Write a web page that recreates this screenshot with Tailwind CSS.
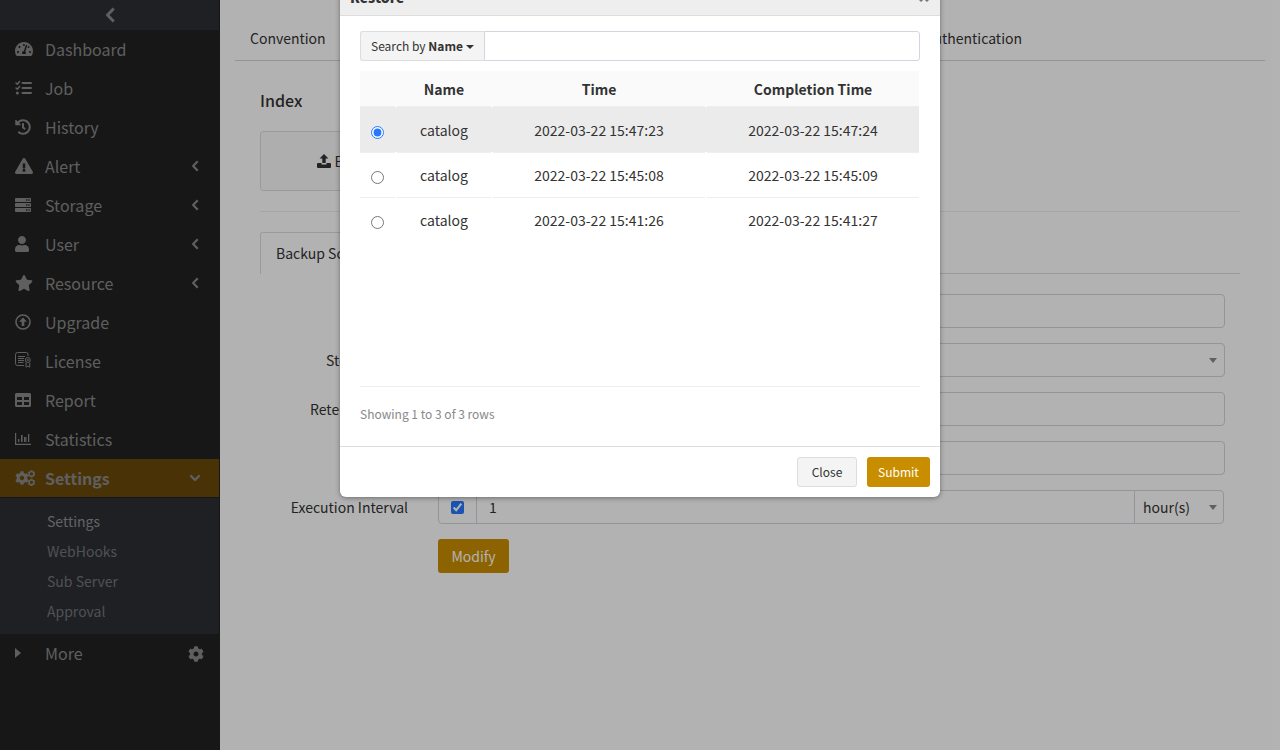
<!DOCTYPE html>
<html lang="en">
<head>
<meta charset="utf-8">
<title>Settings - Index</title>
<script src="https://cdn.jsdelivr.net/npm/@tailwindcss/browser@4"></script>
</head>
<body class="relative min-h-screen overflow-hidden bg-white font-['Noto_Sans_CJK_SC','Noto_Sans',sans-serif] text-sm text-[#333]">
<svg class="hidden" aria-hidden="true">
  <symbol id="left" viewBox="0 0 320 512"><path d="M245 85L80 256l165 171" fill="none" stroke="currentColor" stroke-width="95" stroke-linejoin="round" stroke-linecap="square"/></symbol>
  <symbol id="cog" viewBox="0 0 512 512"><path d="M487.4 315.7l-42.6-24.6c4.3-23.2 4.3-47 0-70.2l42.6-24.6c4.9-2.8 7.1-8.6 5.5-14-11.1-35.6-30-67.8-54.7-94.6-3.8-4.1-10-5.1-14.8-2.3L380.8 110c-17.9-15.4-38.5-27.3-60.8-35.1V25.8c0-5.6-3.9-10.5-9.4-11.7-36.7-8.2-74.3-7.8-109.2 0-5.5 1.2-9.4 6.1-9.4 11.7V75c-22.2 7.9-42.8 19.8-60.8 35.1L88.700 85.500c-4.900-2.800-11-1.900-14.800 2.300-24.700 26.700-43.600 58.900-54.700 94.600-1.700 5.400.6 11.200 5.500 14L67.300 221c-4.300 23.200-4.300 47 0 70.200l-42.600 24.600c-4.900 2.800-7.100 8.600-5.500 14 11.100 35.600 30 67.800 54.700 94.600 3.800 4.100 10 5.100 14.800 2.300l42.600-24.600c17.900 15.400 38.500 27.300 60.800 35.100v49.200c0 5.600 3.900 10.500 9.400 11.700 36.700 8.200 74.300 7.800 109.200 0 5.500-1.200 9.400-6.100 9.400-11.700v-49.200c22.200-7.900 42.800-19.800 60.800-35.100l42.600 24.600c4.900 2.800 11 1.900 14.800-2.300 24.700-26.700 43.600-58.900 54.700-94.600 1.500-5.500-.7-11.300-5.600-14.100zM256 336c-44.100 0-80-35.900-80-80s35.900-80 80-80 80 35.900 80 80-35.900 80-80 80z"/></symbol>
</svg>

<div class="flex min-h-screen">
  <aside class="w-[220px] shrink-0 bg-[#222] text-base text-[#888]">
    <button type="button" aria-label="Collapse menu" class="mr-px flex h-[30px] w-[219px] items-center justify-center bg-[#2c2f34]"><svg class="h-4 w-[10px]"><use href="#left"/></svg></button>
    <nav aria-label="Main">
      <ul>
        <li><a href="#" class="flex h-[39px] items-center pb-[2px] pl-[15px]"><span class="w-[30px]"><svg class="h-4 w-[18px] fill-current" viewBox="0 0 576 512"><path d="M288 32C128.94 32 0 160.94 0 320c0 52.8 14.25 102.26 39.06 144.8 5.61 9.62 16.3 15.2 27.44 15.2h443c11.14 0 21.83-5.58 27.44-15.2C561.75 422.26 576 372.8 576 320c0-159.06-128.94-288-288-288zm0 64c14.71 0 26.58 10.13 30.32 23.65-1.11 2.26-2.64 4.23-3.45 6.67l-9.22 27.67c-5.13 3.49-10.97 6.01-17.64 6.01-17.67 0-32-14.33-32-32S270.33 96 288 96zM96 384c-17.67 0-32-14.33-32-32s14.33-32 32-32 32 14.33 32 32-14.33 32-32 32zm48-160c-17.67 0-32-14.33-32-32s14.33-32 32-32 32 14.33 32 32-14.33 32-32 32zm246.77-72.41l-61.33 184C343.13 347.33 352 364.54 352 384c0 11.72-3.38 22.55-8.88 32H232.88c-5.5-9.45-8.88-20.28-8.88-32 0-33.94 26.5-61.43 59.9-63.59l61.34-184.01c4.17-12.56 17.73-19.45 30.36-15.17 12.57 4.19 19.35 17.79 15.17 30.36zm14.66 57.2l15.52-46.55c3.47-1.29 7.13-2.23 11.05-2.23 17.67 0 32 14.33 32 32s-14.33 32-32 32c-11.38-.01-20.89-6.28-26.57-15.22zM480 384c-17.67 0-32-14.33-32-32s14.33-32 32-32 32 14.33 32 32-14.33 32-32 32z"/></svg></span>Dashboard</a></li>
        <li><a href="#" class="flex h-[39px] items-center pb-[2px] pl-[15px]"><span class="w-[30px]"><svg class="h-4 w-[18px]" viewBox="0 0 18 16" fill="none" stroke="currentColor"><path stroke-width="2" stroke-linecap="round" d="M7.5 3H16M7.5 8H16M7.5 13H16"/><path stroke-width="1.5" stroke-linecap="round" stroke-linejoin="round" d="M1 3l1.3 1.3L4.6 1.6M1 8l1.3 1.3L4.6 6.6"/><circle cx="2.4" cy="13" r="1.5" fill="currentColor" stroke="none"/></svg></span>Job</a></li>
        <li><a href="#" class="flex h-[39px] items-center pb-[2px] pl-[15px]"><span class="w-[30px]"><svg class="h-4 w-4 fill-current" viewBox="0 0 512 512"><path d="M504 255.531c.253 136.64-111.18 248.372-247.82 248.468-59.015.042-113.223-20.53-155.822-54.911-11.077-8.94-11.905-25.541-1.839-35.607l11.267-11.267c8.609-8.609 22.353-9.551 31.891-1.984C173.062 425.135 212.781 440 256 440c101.705 0 184-82.311 184-184 0-101.705-82.311-184-184-184-48.814 0-93.149 18.969-126.068 49.932l50.754 50.754c10.08 10.08 2.941 27.314-11.313 27.314H24c-8.837 0-16-7.163-16-16V38.627c0-14.254 17.234-21.393 27.314-11.314l49.372 49.372C129.209 34.136 189.552 8 256 8c136.81 0 247.747 110.78 248 247.531zm-180.912 78.784l9.823-12.63c8.138-10.463 6.253-25.542-4.21-33.679L288 256.349V152c0-13.255-10.745-24-24-24h-16c-13.255 0-24 10.745-24 24v135.651l65.409 50.874c10.463 8.137 25.541 6.253 33.679-4.21z"/></svg></span>History</a></li>
        <li><a href="#" class="flex h-[39px] items-center pr-[21px] pb-[2px] pl-[15px]"><span class="w-[30px]"><svg class="h-4 w-[18px] fill-current" viewBox="0 0 576 512"><path d="M569.517 440.013C587.975 472.007 564.806 512 527.94 512H48.054c-36.937 0-59.999-40.055-41.577-71.987L246.423 23.985c18.467-32.009 64.72-31.951 83.154 0l239.94 416.028zM288 354c-25.405 0-46 20.595-46 46s20.595 46 46 46 46-20.595 46-46-20.595-46-46-46zm-43.673-165.346l7.418 136c.347 6.364 5.609 11.346 11.982 11.346h48.546c6.373 0 11.635-4.982 11.982-11.346l7.418-136c.375-6.874-5.098-12.654-11.982-12.654h-63.383c-6.884 0-12.356 5.78-11.981 12.654z"/></svg></span><span class="grow">Alert</span><svg class="mt-px h-3 w-2"><use href="#left"/></svg></a></li>
        <li><a href="#" class="flex h-[39px] items-center pr-[21px] pb-[2px] pl-[15px]"><span class="w-[30px]"><svg class="h-4 w-4 fill-current" viewBox="0 0 16 16"><path fill-rule="evenodd" d="M.7 1h14.6q.7 0 .7.7v2.6q0 .7-.7.7H.7Q0 5 0 4.300V1.700Q0 1 .7 1zM11 2.300v1.400h1.300V2.300zM13.300 2.300v1.400h1.300V2.300zM.7 6h14.6q.7 0 .7.7v2.600q0 .7-.7.7H.7Q0 10 0 9.300V6.700Q0 6 .7 6zM11 7.300v1.400h1.300V7.300zM13.300 7.300v1.400h1.300V7.300zM.7 11h14.600q.7 0 .7.7v2.600q0 .7-.7.7H.7Q0 15 0 14.300v-2.600Q0 11 .7 11zM11 12.300v1.400h1.300v-1.400zM13.300 12.300v1.400h1.300v-1.400z"/></svg></span><span class="grow">Storage</span><svg class="mt-px h-3 w-2"><use href="#left"/></svg></a></li>
        <li><a href="#" class="flex h-[39px] items-center pr-[21px] pb-[2px] pl-[15px]"><span class="w-[30px]"><svg class="h-4 w-[14px] fill-current" viewBox="0 0 448 512"><path d="M224 256c70.7 0 128-57.3 128-128S294.7 0 224 0 96 57.3 96 128s57.3 128 128 128zm89.6 32h-16.7c-22.2 10.2-46.9 16-72.9 16s-50.6-5.8-72.9-16h-16.700C60.200 288 0 348.200 0 422.400V464c0 26.500 21.500 48 48 48h352c26.500 0 48-21.500 48-48v-41.600c0-74.200-60.200-134.400-134.400-134.400z"/></svg></span><span class="grow">User</span><svg class="mt-px h-3 w-2"><use href="#left"/></svg></a></li>
        <li><a href="#" class="flex h-[39px] items-center pr-[21px] pb-[2px] pl-[15px]"><span class="w-[30px]"><svg class="h-4 w-[18px] fill-current" viewBox="0 0 576 512"><path d="M259.300 17.800L194 150.200 47.900 171.500c-26.200 3.800-36.700 36.100-17.700 54.600l105.700 103-25 145.500c-4.500 26.300 23.200 46 46.400 33.700L288 439.600l130.700 68.700c23.200 12.200 50.900-7.400 46.400-33.700l-25-145.500 105.700-103c19-18.500 8.500-50.800-17.700-54.600L382 150.200 316.700 17.800c-11.700-23.600-45.600-23.900-57.400 0z"/></svg></span><span class="grow">Resource</span><svg class="mt-px h-3 w-2"><use href="#left"/></svg></a></li>
        <li><a href="#" class="flex h-[39px] items-center pb-[2px] pl-[15px]"><span class="w-[30px]"><svg class="h-4 w-4" viewBox="0 0 16 16"><circle cx="8" cy="8" r="7" fill="none" stroke="currentColor" stroke-width="1.600"/><path fill="currentColor" d="M8 3.500l4 4.300H9.300V12H6.700V7.800H4z"/></svg></span>Upgrade</a></li>
        <li><a href="#" class="flex h-[39px] items-center pb-[2px] pl-[15px]"><span class="w-[30px]"><svg class="mb-px h-4 w-4" viewBox="0 0 16 16" fill="none" stroke="currentColor"><path d="M9 13.500H2.500q-2 0-2-2v-9q0-2 2-2h9q1.500 0 1.500 1.500v2"/><path d="M3 4.500h7M3 6.500h6M3 8.500h6M3 10.500h5.500"/><circle cx="12.800" cy="8" r="2.500"/><circle cx="12.800" cy="8" r=".7"/><path d="M11 10.500v4.700l1.800-1.200 1.900 1.200v-4.700"/></svg></span>License</a></li>
        <li><a href="#" class="flex h-[39px] items-center pb-[2px] pl-[15px]"><span class="w-[30px]"><svg class="h-4 w-4 fill-current" viewBox="0 0 512 512"><path d="M464 32H48C21.490 32 0 53.490 0 80v352c0 26.510 21.490 48 48 48h416c26.510 0 48-21.490 48-48V80c0-26.510-21.490-48-48-48zM224 416H64v-96h160v96zm0-160H64v-96h160v96zm224 160H288v-96h160v96zm0-160H288v-96h160v96z"/></svg></span>Report</a></li>
        <li><a href="#" class="flex h-[39px] items-center pb-[2px] pl-[15px]"><span class="w-[30px]"><svg class="h-4 w-4 fill-current" viewBox="0 0 16 16"><path d="M0 2h1.200v10.800H16V14H0zM3 8h1.300v3H3zM6 4h1.600v7H6zM9 6h1.500v5H9zM10.800 6h.7v5h-.7zM13 3h1.300v8H13z"/></svg></span>Statistics</a></li>
        <li>
          <a href="#" class="mr-px flex h-[39px] items-center border-b border-[#222] bg-[#6a480b] pr-[18px] pl-[15px] font-bold"><span class="w-[30px]"><svg class="h-4 w-5 fill-current" viewBox="0 0 20 16"><use href="#cog" x="0" y="1" width="14" height="14"/><path fill-rule="evenodd" d="M15.500.3h2l.3.9 1 .5.9-.1.3 1.600-.6.800.6.800-.4 1.500-.9-.1-.9.500-.3.800h-2l-.3-.800-.9-.500-.9.100-.4-1.500.600-.800-.600-.800.300-1.600 1 .100.900-.500zM16.500 2.300a1.600 1.600 0 1 0 .001 0zM15.500 8.800h2l.3.9 1 .5.9-.1.3 1.600-.6.800.6.800-.4 1.500-.9-.1-.9.500-.3.800h-2l-.3-.800-.9-.500-.9.100-.4-1.500.600-.800-.600-.800.300-1.600 1 .100.900-.500zM16.500 10.800a1.600 1.600 0 1 0 .001 0z"/></svg></span><span class="grow">Settings</span><svg class="h-3 w-3" viewBox="0 0 12 12" fill="none" stroke="currentColor" stroke-width="2.400"><path stroke-linecap="round" stroke-linejoin="round" d="M2 4l4 4 4-4"/></svg></a>
          <ul class="mr-px bg-[#2c2f34] pt-2 pb-2 text-sm text-[#747577]">
            <li><a href="#" class="flex h-[30px] items-center pl-[47px] text-[#909090]">Settings</a></li>
            <li><a href="#" class="flex h-[30px] items-center pl-[47px]">WebHooks</a></li>
            <li><a href="#" class="flex h-[30px] items-center pl-[47px]">Sub Server</a></li>
            <li><a href="#" class="flex h-[30px] items-center pl-[47px]">Approval</a></li>
          </ul>
        </li>
        <li class="flex h-[39px] items-center pr-4 pl-[15px]"><a href="#" class="flex grow items-center pb-[2px]"><span class="w-[30px]"><svg class="h-[10px] w-[6px] fill-current" viewBox="0 0 6 10"><path d="M0 0l6 5-6 5z"/></svg></span>More</a><button type="button" aria-label="Menu options"><svg class="h-4 w-4 fill-current"><use href="#cog"/></svg></button></li>
      </ul>
    </nav>
  </aside>

  <main class="grow px-[15px]">
    <nav aria-label="Sections" class="flex h-[61px] items-center justify-between border-b border-[#d2d6de] pt-[21px] pr-[243px] pb-[6px] pl-[15px]"><a href="#">Convention</a><a href="#">Authentication</a></nav>
    <div class="px-[25px] pt-[29px]">
      <h1 class="h-[41px] text-base leading-5 font-medium">Index</h1>
      <button type="button" class="flex h-[60px] w-[180px] items-center justify-center gap-1 rounded-[3px] border border-[#ddd] bg-[#f9f9f9]"><svg class="h-[14px] w-[14px] fill-current" viewBox="0 0 14 14"><path d="M7 0l4.500 4.500H8.700V9H5.300V4.500H2.500zM1 9h3.500v1.500h5V9H13q1 0 1 1v3q0 1-1 1H1q-1 0-1-1v-3q0-1 1-1z"/></svg>Backup</button>
      <hr class="mt-5 mb-5 border-[#eee]">
      <div role="tablist" class="flex border-b border-[#ddd]"><button type="button" role="tab" aria-selected="true" class="-mb-px h-[42px] rounded-t-[3px] border border-b-0 border-[#ddd] bg-white px-[15px] pb-[2px]">Backup Schedule</button></div>
      <form class="mt-5 flex flex-col gap-[15px] pr-[15px]">
        <div class="flex h-[34px] items-center"><label for="f1" class="mr-[30px] w-[148px] shrink-0 text-right">Name</label><input id="f1" class="h-[34px] grow rounded border border-[#d2d6de] px-3"></div>
        <div class="flex h-[34px] items-center"><label for="f2" class="mr-[30px] w-[148px] shrink-0 pl-[66px]">Storage</label><div class="relative grow"><select id="f2" class="block h-[34px] w-full appearance-none rounded border border-[#d2d6de] px-3"><option></option></select><svg class="pointer-events-none absolute top-[15px] right-2 h-[5px] w-2 fill-[#888]" viewBox="0 0 8 5"><path d="M0 0h8L4 5z"/></svg></div></div>
        <div class="flex h-[34px] items-center"><label for="f3" class="mr-[30px] w-[148px] shrink-0 pl-[50px]">Retention</label><input id="f3" class="h-[34px] grow rounded border border-[#d2d6de] px-3"></div>
        <div class="flex h-[34px] items-center"><label for="f4" class="mr-[30px] w-[148px] shrink-0 text-right">Time</label><input id="f4" class="h-[34px] grow rounded border border-[#d2d6de] px-3"></div>
        <div class="flex h-[34px] items-center"><label for="f5" class="mr-[30px] w-[148px] shrink-0 text-right">Execution Interval</label>
          <div class="mr-px flex h-[34px] grow rounded border border-[#d2d6de]">
            <span class="flex w-[38px] items-center justify-center border-r border-[#d2d6de] pt-px"><input type="checkbox" checked aria-label="Enable interval" class="h-[13px] w-[13px] accent-[#2878ff]"></span>
            <input id="f5" value="1" class="min-w-0 grow px-3">
            <div class="relative w-[89px] border-l border-[#d2d6de]"><select aria-label="Interval unit" class="block h-8 w-full appearance-none pl-2"><option>hour(s)</option></select><svg class="pointer-events-none absolute top-[14px] right-[6px] h-[5px] w-2 fill-[#888]" viewBox="0 0 8 5"><path d="M0 0h8L4 5z"/></svg></div>
          </div></div>
        <button type="button" class="ml-[178px] h-[34px] w-[71px] self-start rounded-[3px] bg-[#c98e00] text-white">Modify</button>
      </form>
    </div>
  </main>
</div>

<div class="absolute inset-0 bg-black/30"></div>

<section role="dialog" aria-modal="true" aria-labelledby="dialog-title" class="absolute -top-5 left-1/2 w-[600px] -translate-x-1/2 overflow-hidden rounded-md bg-white shadow-[0_1px_5px_rgba(0,0,0,0.4)]">
  <header class="flex h-9 items-center justify-between border-b border-[#ddd] bg-[#eee] px-[10px] pb-[2px]">
    <h2 id="dialog-title" class="text-sm font-black">Restore</h2>
    <button type="button" aria-label="Close dialog"><svg class="h-3 w-3" viewBox="0 0 12 12" stroke="#777" stroke-width="3"><path d="M2 2l8 8M10 2l-8 8"/></svg></button>
  </header>
  <div class="px-5 pt-[15px]">
    <div class="flex h-[30px] text-xs">
      <button type="button" class="flex w-[124px] items-center justify-between rounded-l-[3px] border border-r-0 border-[#ddd] bg-[#f4f4f4] px-[10px]"><span class="whitespace-nowrap">Search by <b>Name</b></span><svg class="mt-[2px] h-1 w-2 shrink-0 fill-current" viewBox="0 0 8 4"><path d="M0 0h8L4 4z"/></svg></button>
      <input aria-label="Search" class="min-w-0 grow rounded-r-[3px] border border-[#d2d6de] px-2">
    </div>
    <div class="mt-[10px] h-[316px] border-b border-[#eee]">
      <table class="w-[559px] table-fixed border-separate border-spacing-0 text-center">
        <colgroup><col class="w-[37px]"><col class="w-[96px]"><col class="w-[214px]"><col></colgroup>
        <thead><tr class="h-9 bg-[#fafafa] *:relative *:border-b *:border-[#eee] *:pr-[2px] *:after:absolute *:after:right-0 *:after:-bottom-px *:after:h-px *:after:w-[2px] *:after:bg-white *:last:pr-0 *:last:after:hidden"><th aria-label="Select"></th><th>Name</th><th>Time</th><th>Completion Time</th></tr></thead>
        <tbody>
          <tr class="h-[46px] bg-[#ebebeb] *:relative *:border-b *:border-[#eee] *:pr-[2px] *:after:absolute *:after:right-0 *:after:-bottom-px *:after:h-px *:after:w-[2px] *:after:bg-white *:last:pr-0 *:last:after:hidden"><td><input type="radio" name="row" checked aria-label="Backup of 15:47:23" class="mx-auto mt-[6px] block h-[13px] w-[13px] accent-[#2878ff]"></td><td>catalog</td><td>2022-03-22 15:47:23</td><td>2022-03-22 15:47:24</td></tr>
          <tr class="h-[45px] *:relative *:border-b *:border-[#eee] *:pr-[2px] *:after:absolute *:after:right-0 *:after:-bottom-px *:after:h-px *:after:w-[2px] *:after:bg-white *:last:pr-0 *:last:after:hidden"><td><input type="radio" name="row" aria-label="Backup of 15:45:08" class="mx-auto mt-1 block h-[13px] w-[13px] accent-[#2878ff]"></td><td>catalog</td><td>2022-03-22 15:45:08</td><td>2022-03-22 15:45:09</td></tr>
          <tr class="h-11 *:pr-[2px] *:last:pr-0"><td><input type="radio" name="row" aria-label="Backup of 15:41:26" class="mx-auto mt-1 block h-[13px] w-[13px] accent-[#2878ff]"></td><td>catalog</td><td>2022-03-22 15:41:26</td><td>2022-03-22 15:41:27</td></tr>
        </tbody>
      </table>
    </div>
    <p class="flex h-[59px] items-center pb-[6px] text-xs text-[#888]">Showing 1 to 3 of 3 rows</p>
  </div>
  <footer class="flex justify-end gap-[10px] border-t border-[#ddd] p-[10px] text-xs">
    <button type="button" class="h-[30px] w-[60px] rounded-[3px] border border-[#ddd] bg-[#f4f4f4]">Close</button>
    <button type="button" class="h-[30px] w-[63px] rounded-[3px] bg-[#c98e00] text-white">Submit</button>
  </footer>
</section>
</body>
</html>
